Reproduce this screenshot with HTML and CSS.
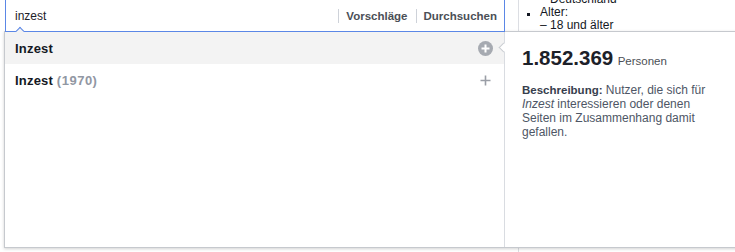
FILE: index.html
```html
<!DOCTYPE html>
<html lang="de">
<head>
<meta charset="utf-8">
<title>Suche</title>
<link rel="stylesheet" href="styles.css">
</head>
<body>
<div class="page">
  <div class="main">
    <div class="search">
      <span class="query">inzest</span>
      <span class="btn">Vorschläge</span>
      <span class="btn">Durchsuchen</span>
    </div>
  </div>
  <aside class="side">
    <div class="cont">Deutschland</div>
    <ul class="facts">
      <li>Alter:<div>– 18 und älter</div></li>
    </ul>
  </aside>
  <div class="dropdown">
    <div class="list">
      <div class="row active">
        <span class="name">Inzest</span>
        <svg class="icon" width="15" height="15" viewBox="0 0 15 15"><circle cx="7.5" cy="7.5" r="7.5" fill="#a6aab1"/><path d="M7.5 3.5v8M3.5 7.5h8" stroke="#fff" stroke-width="2"/></svg>
      </div>
      <div class="row second">
        <span class="name">Inzest <span class="year">(1970)</span></span>
        <svg class="icon" width="15" height="15" viewBox="0 0 15 15"><path d="M7.5 2.5v10M2.5 7.5h10" stroke="#9a9ea6" stroke-width="1.6"/></svg>
      </div>
    </div>
    <div class="detail">
      <div class="count"><span class="num">1.852.369</span> <span class="unit">Personen</span></div>
      <p class="desc"><b>Beschreibung:</b> Nutzer, die sich für <i>Inzest</i> interessieren oder denen Seiten im Zusammenhang damit gefallen.</p>
    </div>
  </div>
</div>
</body>
</html>
```
FILE: styles.css
```css
html, body {
  margin: 0;
  padding: 0;
  background: #fff;
  font-family: "Liberation Sans", Arial, sans-serif;
  color: #141823;
}
.page {
  position: relative;
  display: flex;
  height: 252px;
  overflow: hidden;
}
.main {
  margin-left: 5px;
  width: 500px;
  flex: none;
}
.search {
  position: relative;
  z-index: 2;
  box-sizing: border-box;
  height: 32px;
  border: 1px solid #5b87e6;
  border-top: 0;
  background: #fff;
  display: flex;
  align-items: center;
  font-size: 12px;
}
.search::after {
  content: "";
  position: absolute;
  left: 11px;
  top: 28px;
  width: 6px;
  height: 6px;
  box-sizing: border-box;
  border-top: 1px solid #5b87e6;
  border-left: 1px solid #5b87e6;
  background: #f3f3f3;
  transform: rotate(45deg);
}
.query {
  flex: 1;
  padding-left: 9px;
  color: #1d2129;
}
.btn {
  position: relative;
  padding: 0 8px 0 8px;
  font-size: 11.5px;
  font-weight: bold;
  color: #4b4f56;
}
.btn:last-child { padding-right: 7px; }
.btn::before {
  content: "";
  position: absolute;
  left: 0;
  top: 50%;
  margin-top: -7px;
  width: 1px;
  height: 14px;
  background: #ced2d9;
}
.side {
  margin-left: 13px;
  border-left: 1px solid #dcdee3;
  flex: 1;
  font-size: 12px;
  line-height: 13px;
  color: #141823;
}
.cont {
  margin-top: -7px;
  padding-left: 31px;
}
.facts {
  margin: 0;
  padding: 0 0 0 21px;
  list-style: none;
}
.facts li {
  position: relative;
}
.facts li::before {
  content: "";
  position: absolute;
  left: -13px;
  top: 7px;
  width: 3px;
  height: 3px;
  background: #141823;
}
.dropdown {
  position: absolute;
  z-index: 1;
  left: 4px;
  top: 31px;
  width: 760px;
  height: 217px;
  box-sizing: border-box;
  border: 1px solid #c6c9ce;
  border-right: 0;
  background: #fff;
  box-shadow: 0 1px 3px rgba(0, 0, 0, 0.18);
  display: flex;
}
.list {
  width: 499px;
  flex: none;
}
.row {
  height: 32px;
  display: flex;
  align-items: center;
  justify-content: space-between;
  padding: 0 11px 0 10px;
  font-size: 13px;
  font-weight: bold;
  letter-spacing: 0.2px;
}
.row.active {
  background: #f3f3f3;
}
.row.second {
  padding-bottom: 2px;
}
.year {
  color: #9197a3;
  letter-spacing: 0.5px;
}
.icon {
  display: block;
}
.detail {
  position: relative;
  flex: 1;
  border-left: 1px solid #d9dce1;
  padding: 14px 17px 0 17px;
}
.detail::before {
  content: "";
  position: absolute;
  left: -5px;
  top: 12px;
  width: 7px;
  height: 7px;
  box-sizing: border-box;
  border-left: 1px solid #c9ccd1;
  border-bottom: 1px solid #c9ccd1;
  background: #fff;
  transform: rotate(45deg);
}
.count {
  line-height: 24px;
  white-space: nowrap;
}
.num {
  font-size: 20.5px;
  font-weight: bold;
  color: #1d2129;
}
.unit {
  font-size: 11.5px;
  color: #4b4f56;
}
.desc {
  margin: 10px 0 0;
  width: 200px;
  font-size: 12px;
  line-height: 14px;
  color: #4e5665;
}
.desc b {
  font-size: 11.5px;
  color: #373e4d;
}
```
